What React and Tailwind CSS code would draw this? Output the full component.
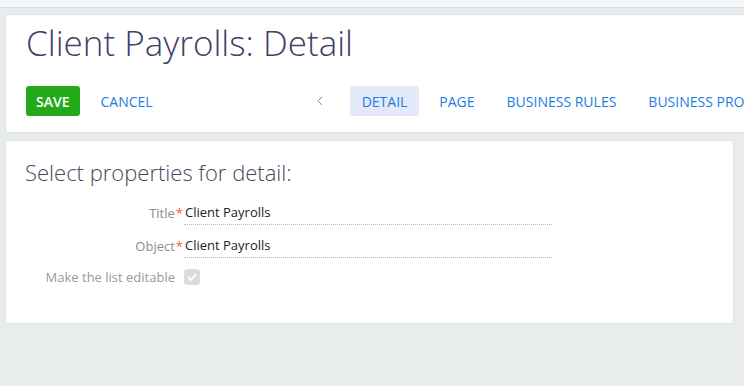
import React from "react";

const font = { fontFamily: '"Open Sans", "Liberation Sans", sans-serif' };

function Field({ label, value, required }) {
  return (
    <div className="flex items-end h-[33px]">
      <div className="w-[177px] text-right text-[13px] text-[#8c8c8c] leading-[18px] pb-[3px]">
        {label}
        {required && <span className="text-[#f2553b] ml-[1px]">*</span>}
      </div>
      <div className="ml-[1px] w-[368px] border-b border-dotted border-[#b8b8b8] pl-[1px] pb-[3px] text-[13px] leading-[18px] text-[#222]">
        {value}
      </div>
    </div>
  );
}

export default function App() {
  const tabs = ["DETAIL", "PAGE", "BUSINESS RULES", "BUSINESS PROCESSES"];

  return (
    <div className="w-[744px] h-[386px] bg-[#e9eced] overflow-hidden" style={font}>
      {/* top strip */}
      <div className="h-[8px] bg-[#f6f7fb] border-b border-[#dde0e4]" />

      {/* header card */}
      <div className="ml-[5px] mt-[6px] h-[119px] bg-white border border-r-0 border-[#e2e5e7] rounded-l-[3px] pl-[20px] overflow-hidden">
        <h1 className="pt-[5px] text-[35px] font-light leading-[46px] text-[#3f3f68] whitespace-nowrap">
          Client Payrolls: Detail
        </h1>
        <div className="mt-[20px] flex items-center h-[30px] whitespace-nowrap">
          <button className="h-[30px] px-[10px] rounded-[3px] bg-[#22aa1a] text-white text-[14px] font-semibold">
            SAVE
          </button>
          <button className="ml-[11px] h-[30px] px-[10px] text-[14px] text-[#1d7ddf]">
            CANCEL
          </button>
          <div className="ml-[153px] w-[12px] flex items-center justify-center">
            <svg width="8" height="10" viewBox="0 0 8 10" fill="none">
              <path d="M6 1 L2 5 L6 9" stroke="#8a8a8a" strokeWidth="1" />
            </svg>
          </div>
          <div className="ml-[26px] flex items-center gap-[8px]">
            {tabs.map((t, i) => (
              <div
                key={t}
                className={`h-[30px] px-[12px] flex items-center rounded-[3px] text-[14px] text-[#1d7ddf] ${
                  i === 0 ? "bg-[#e3e9f8]" : ""
                }`}
              >
                {t}
              </div>
            ))}
          </div>
        </div>
      </div>

      {/* properties card */}
      <div className="ml-[5px] mt-[7px] w-[729px] h-[184px] bg-white border border-[#e2e5e7] rounded-[3px]">
        <h2 className="pl-[19px] pt-[15px] text-[22px] font-light leading-[32px] text-[#454a5c]">
          Select properties for detail:
        </h2>
        <div className="mt-[4px]">
          <Field label="Title" value="Client Payrolls" required />
          <Field label="Object" value="Client Payrolls" required />
          <div className="flex items-center h-[38px]">
            <div className="w-[177px] text-right text-[13px] text-[#999] leading-[18px] pr-[8px]">
              Make the list editable
            </div>
            <div className="ml-[1px] w-[16px] h-[16px] rounded-[3px] bg-[#dcdcdc] flex items-center justify-center">
              <svg width="10" height="8" viewBox="0 0 10 8" fill="none">
                <path d="M1 4 L4 7 L9 1" stroke="#ffffff" strokeWidth="1.8" />
              </svg>
            </div>
          </div>
        </div>
      </div>
    </div>
  );
}
